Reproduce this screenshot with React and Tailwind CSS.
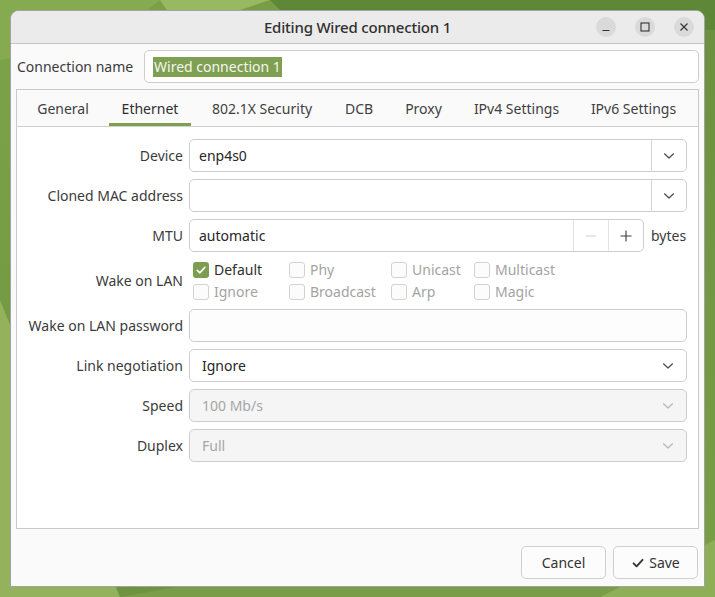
import React from "react";

const FONT = { fontFamily: '"Noto Sans", "Open Sans", sans-serif' };

function Chevron({ color = "#4a4a4a" }) {
  return (
    <svg width="12" height="8" viewBox="0 0 12 8" fill="none">
      <path d="M1.5 1.8 L6 6 L10.5 1.8" stroke={color} strokeWidth="1.2" strokeLinecap="round" strokeLinejoin="round" />
    </svg>
  );
}

function Check({ color = "#ffffff", w = 12 }) {
  return (
    <svg width={w} height={w} viewBox="0 0 12 12" fill="none">
      <path d="M2.2 6.3 L4.8 8.9 L9.9 3.3" stroke={color} strokeWidth="1.6" strokeLinecap="round" strokeLinejoin="round" />
    </svg>
  );
}

function CheckBox({ label, checked }) {
  return (
    <div className="flex items-center gap-[5px] h-[21px]">
      {checked ? (
        <div className="w-[16px] h-[16px] rounded-[3px] bg-[#7c9e4e] flex items-center justify-center">
          <Check />
        </div>
      ) : (
        <div className="w-[16px] h-[16px] rounded-[3px] border border-[#d2d2d2] bg-[#fcfcfc]" />
      )}
      <span className={checked ? "text-[#2f2f2f]" : "text-[#a3a3a3]"}>{label}</span>
    </div>
  );
}

function Label({ children }) {
  return <div className="flex items-center justify-end text-[#3b3b3b] whitespace-nowrap">{children}</div>;
}

function ComboEntry({ value }) {
  return (
    <div className="flex h-[33px] rounded-[5px] border border-[#cdcdcd] bg-white">
      <div className="flex-1 flex items-center pl-[9px] text-[#262626]">{value}</div>
      <div className="w-[35px] border-l border-[#d5d5d5] flex items-center justify-center">
        <Chevron />
      </div>
    </div>
  );
}

function ComboBox({ value, disabled }) {
  return (
    <div
      className={
        "flex items-center h-[33px] rounded-[5px] border border-[#cdcdcd] pl-[12px] pr-[12px] " +
        (disabled ? "bg-[#f5f5f5] text-[#a6a6a6]" : "bg-white text-[#262626]")
      }
    >
      <div className="flex-1">{value}</div>
      <Chevron color={disabled ? "#b5b5b5" : "#4a4a4a"} />
    </div>
  );
}

const tabs = [
  ["General", 76],
  ["Ethernet", 82],
  ["802.1X Security", 126],
  ["DCB", 52],
  ["Proxy", 61],
  ["IPv4 Settings", 109],
  ["IPv6 Settings", 109],
];

export default function App() {
  return (
    <div className="relative w-[715px] h-[597px] overflow-hidden bg-[#6f9641] text-[14px]" style={FONT}>
      <svg className="absolute inset-0" width="715" height="597" viewBox="0 0 715 597">
        <defs>
          <linearGradient id="g1" x1="0" y1="0" x2="1" y2="1">
            <stop offset="0" stopColor="#7ea44a" />
            <stop offset="0.5" stopColor="#6b9140" />
            <stop offset="1" stopColor="#79a046" />
          </linearGradient>
        </defs>
        <rect width="715" height="597" fill="url(#g1)" />
        <polygon points="0,0 160,0 110,40 0,60" fill="#86aa50" />
        <polygon points="160,0 270,0 180,30" fill="#98b862" />
        <polygon points="270,0 715,0 715,30 300,30" fill="#5f8738" />
        <polygon points="1040,0 715,0 715,40" fill="#6a9a3a" />
        <polygon points="0,300 0,597 120,597" fill="#93b25b" />
        <polygon points="120,597 330,560 715,560 715,597" fill="#7b9d49" />
        <polygon points="600,597 715,540 715,597" fill="#8fae58" />
      </svg>

      <div className="relative pt-[10px] pl-[10px]">
        <div className="w-[695px] h-[577px] border border-[#a2a2a2] rounded-t-[9px] overflow-hidden flex flex-col bg-[#fafafa]">
          {/* Title bar */}
          <div className="h-[33px] shrink-0 bg-[#ebebeb] border-b border-[#c4c4c4] grid grid-cols-[1fr_auto_1fr] items-center">
            <div />
            <div className="text-[15px] font-medium text-[#303030] tracking-[-0.2px]">Editing Wired connection 1</div>
            <div className="flex justify-end items-center gap-[19px] pr-[10px]">
              <div className="w-[20px] h-[20px] rounded-full bg-[#dadada] flex items-center justify-center">
                <svg width="10" height="10" viewBox="0 0 10 10"><path d="M1.5 8.5 H8.5" stroke="#333" strokeWidth="1.2" /></svg>
              </div>
              <div className="w-[20px] h-[20px] rounded-full bg-[#dadada] flex items-center justify-center">
                <svg width="10" height="10" viewBox="0 0 10 10"><rect x="1" y="1" width="8" height="8" fill="none" stroke="#333" strokeWidth="1.1" /></svg>
              </div>
              <div className="w-[20px] h-[20px] rounded-full bg-[#dadada] flex items-center justify-center">
                <svg width="10" height="10" viewBox="0 0 10 10"><path d="M1.5 1.5 L8.5 8.5 M8.5 1.5 L1.5 8.5" stroke="#333" strokeWidth="1.1" /></svg>
              </div>
            </div>
          </div>

          {/* Content */}
          <div className="flex-1 flex flex-col px-[5px] pt-[6px] pb-[7px]">
            <div className="flex items-center h-[33px]">
              <div className="w-[128px] pl-[1px] text-[#3b3b3b] whitespace-nowrap">Connection name</div>
              <div className="flex-1 h-[33px] rounded-[5px] border border-[#cdcdcd] bg-white flex items-center pl-[8px]">
                <span className="bg-[#7f9f52] text-[#f4f7ee] leading-[20px] px-[1px]">Wired connection 1</span>
              </div>
            </div>

            {/* Notebook */}
            <div className="mt-[6px] h-[440px] border border-[#c9c9c9] bg-white flex flex-col">
              <div className="h-[37px] shrink-0 bg-[#fafafa] border-b border-[#d0d0d0] flex pl-[8px] gap-[8px]">
                {tabs.map(([t, w], i) => (
                  <div
                    key={t}
                    className={
                      "flex items-center justify-center whitespace-nowrap " +
                      (i === 1 ? "border-b-[3px] border-[#7ea04f] pt-[3px] text-[#2f2f2f]" : "text-[#3f3f3f]")
                    }
                    style={{ width: w }}
                  >
                    {t}
                  </div>
                ))}
              </div>

              <div className="pt-[12px] pl-[12px] grid grid-cols-[154px_498px] gap-x-[6px] gap-y-[7px]">
                <Label>Device</Label>
                <ComboEntry value="enp4s0" />

                <Label>Cloned MAC address</Label>
                <ComboEntry value="" />

                <Label>MTU</Label>
                <div className="flex items-center">
                  <div className="w-[455px] h-[33px] rounded-[5px] border border-[#cdcdcd] bg-white flex">
                    <div className="flex-1 flex items-center pl-[9px] text-[#262626]">automatic</div>
                    <div className="w-[35px] border-l border-[#e3e3e3] flex items-center justify-center">
                      <svg width="12" height="12" viewBox="0 0 12 12"><path d="M1 6 H11" stroke="#d0d0d0" strokeWidth="1.1" /></svg>
                    </div>
                    <div className="w-[35px] border-l border-[#e3e3e3] flex items-center justify-center">
                      <svg width="12" height="12" viewBox="0 0 12 12"><path d="M0.5 6 H11.5 M6 0.5 V11.5" stroke="#3a3a3a" strokeWidth="1.1" /></svg>
                    </div>
                  </div>
                  <span className="ml-[7px] text-[#3b3b3b]">bytes</span>
                </div>

                <Label>Wake on LAN</Label>
                <div className="h-[43px] pl-[4px] grid grid-cols-[96px_102px_83px_auto] gap-y-[1px] content-start">
                  <CheckBox label="Default" checked />
                  <CheckBox label="Phy" />
                  <CheckBox label="Unicast" />
                  <CheckBox label="Multicast" />
                  <CheckBox label="Ignore" />
                  <CheckBox label="Broadcast" />
                  <CheckBox label="Arp" />
                  <CheckBox label="Magic" />
                </div>

                <Label>Wake on LAN password</Label>
                <div className="h-[33px] rounded-[5px] border border-[#cdcdcd] bg-[#fdfdfd]" />

                <Label>Link negotiation</Label>
                <ComboBox value="Ignore" />

                <Label>Speed</Label>
                <ComboBox value="100 Mb/s" disabled />

                <Label>Duplex</Label>
                <ComboBox value="Full" disabled />
              </div>
            </div>

            <div className="mt-[17px] flex justify-end gap-[7px] pr-[1px]">
              <div className="w-[85px] h-[33px] rounded-[5px] border border-[#cfcfcf] bg-[#fcfcfc] flex items-center justify-center text-[#333]">
                Cancel
              </div>
              <div className="w-[85px] h-[33px] rounded-[5px] border border-[#cfcfcf] bg-[#fcfcfc] flex items-center justify-center gap-[4px] text-[#333]">
                <Check color="#333" w={14} />
                Save
              </div>
            </div>
          </div>
        </div>
      </div>
    </div>
  );
}
